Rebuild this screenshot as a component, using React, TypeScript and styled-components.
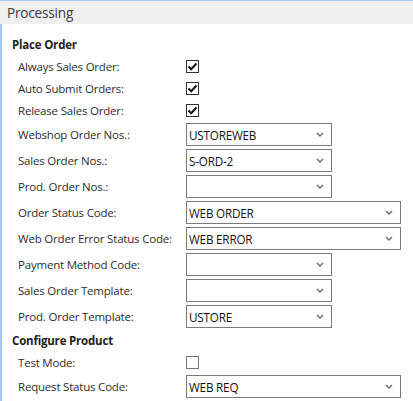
import React from "react";
import styled, { createGlobalStyle } from "styled-components";

const Global = createGlobalStyle`
  html, body { margin: 0; padding: 0; background: #fff; }
  body { font-family: "Open Sans", "Noto Sans", sans-serif; }
`;

const Panel = styled.div`
  width: 413px;
  height: 401px;
  box-sizing: border-box;
  border-top: 1px solid #a9c8ee;
  background: #fff;
  overflow: hidden;
`;

const Header = styled.div`
  height: 23px;
  background: #efefef;
  display: flex;
  align-items: center;
  padding-left: 7px;
  font-size: 13.6px;
  letter-spacing: -0.2px;
  color: #3c3c3c;
`;

const Body = styled.div`
  border-left: 2px solid #a9c8ee;
  height: 377px;
  box-sizing: border-box;
  padding: 11px 0 0 10px;
  display: flex;
  flex-direction: column;
  gap: 3px;
`;

const Heading = styled.div`
  height: 19px;
  display: flex;
  align-items: center;
  font-size: 11.5px;
  letter-spacing: -0.2px;
  font-weight: 700;
  color: #1e1e1e;
`;

const Row = styled.div<{ $tall?: boolean }>`
  height: ${(p) => (p.$tall ? 23 : 19)}px;
  display: grid;
  grid-template-columns: 168px 1fr;
  align-items: center;
  padding-left: 6px;
`;

const Label = styled.span`
  font-size: 11.5px;
  letter-spacing: -0.2px;
  color: #2e2e2e;
  white-space: nowrap;
`;

const Box = styled.div<{ $on?: boolean }>`
  width: 13px;
  height: 13px;
  box-sizing: border-box;
  border: 1px solid ${(p) => (p.$on ? "#333" : "#777")};
  display: flex;
  align-items: center;
  justify-content: center;
  background: #fff;
`;

const Select = styled.div<{ $wide?: boolean }>`
  width: ${(p) => (p.$wide ? 215 : 146)}px;
  height: 23px;
  box-sizing: border-box;
  border: 1px solid #7a7a7a;
  display: flex;
  align-items: center;
  justify-content: space-between;
  padding: 0 7px 0 2px;
  font-size: 11.7px;
  letter-spacing: -0.2px;
  color: #111;
`;

const Check = () => (
  <svg width="11" height="11" viewBox="0 0 11 11">
    <path d="M1.5 5.5 L4.2 8.2 L9.5 2.5" fill="none" stroke="#111" strokeWidth="2" />
  </svg>
);

const Chevron = () => (
  <svg width="8" height="5" viewBox="0 0 8 5">
    <path d="M1 1 L4 4 L7 1" fill="none" stroke="#6a6a6a" strokeWidth="1.4" />
  </svg>
);

type Field =
  | { kind: "check"; label: string; on: boolean }
  | { kind: "select"; label: string; value: string; wide?: boolean }
  | { kind: "heading"; label: string };

const fields: Field[] = [
  { kind: "heading", label: "Place Order" },
  { kind: "check", label: "Always Sales Order:", on: true },
  { kind: "check", label: "Auto Submit Orders:", on: true },
  { kind: "check", label: "Release Sales Order:", on: true },
  { kind: "select", label: "Webshop Order Nos.:", value: "USTOREWEB" },
  { kind: "select", label: "Sales Order Nos.:", value: "S-ORD-2" },
  { kind: "select", label: "Prod. Order Nos.:", value: "" },
  { kind: "select", label: "Order Status Code:", value: "WEB ORDER", wide: true },
  { kind: "select", label: "Web Order Error Status Code:", value: "WEB ERROR", wide: true },
  { kind: "select", label: "Payment Method Code:", value: "" },
  { kind: "select", label: "Sales Order Template:", value: "" },
  { kind: "select", label: "Prod. Order Template:", value: "USTORE" },
  { kind: "heading", label: "Configure Product" },
  { kind: "check", label: "Test Mode:", on: false },
  { kind: "select", label: "Request Status Code:", value: "WEB REQ", wide: true },
];

export default function App() {
  return (
    <>
      <Global />
      <Panel>
        <Header>Processing</Header>
        <Body>
          {fields.map((f, i) => {
            if (f.kind === "heading") return <Heading key={i}>{f.label}</Heading>;
            if (f.kind === "check")
              return (
                <Row key={i}>
                  <Label>{f.label}</Label>
                  <Box $on={f.on}>{f.on && <Check />}</Box>
                </Row>
              );
            return (
              <Row key={i} $tall>
                <Label>{f.label}</Label>
                <Select $wide={f.wide}>
                  <span>{f.value}</span>
                  <Chevron />
                </Select>
              </Row>
            );
          })}
        </Body>
      </Panel>
    </>
  );
}
